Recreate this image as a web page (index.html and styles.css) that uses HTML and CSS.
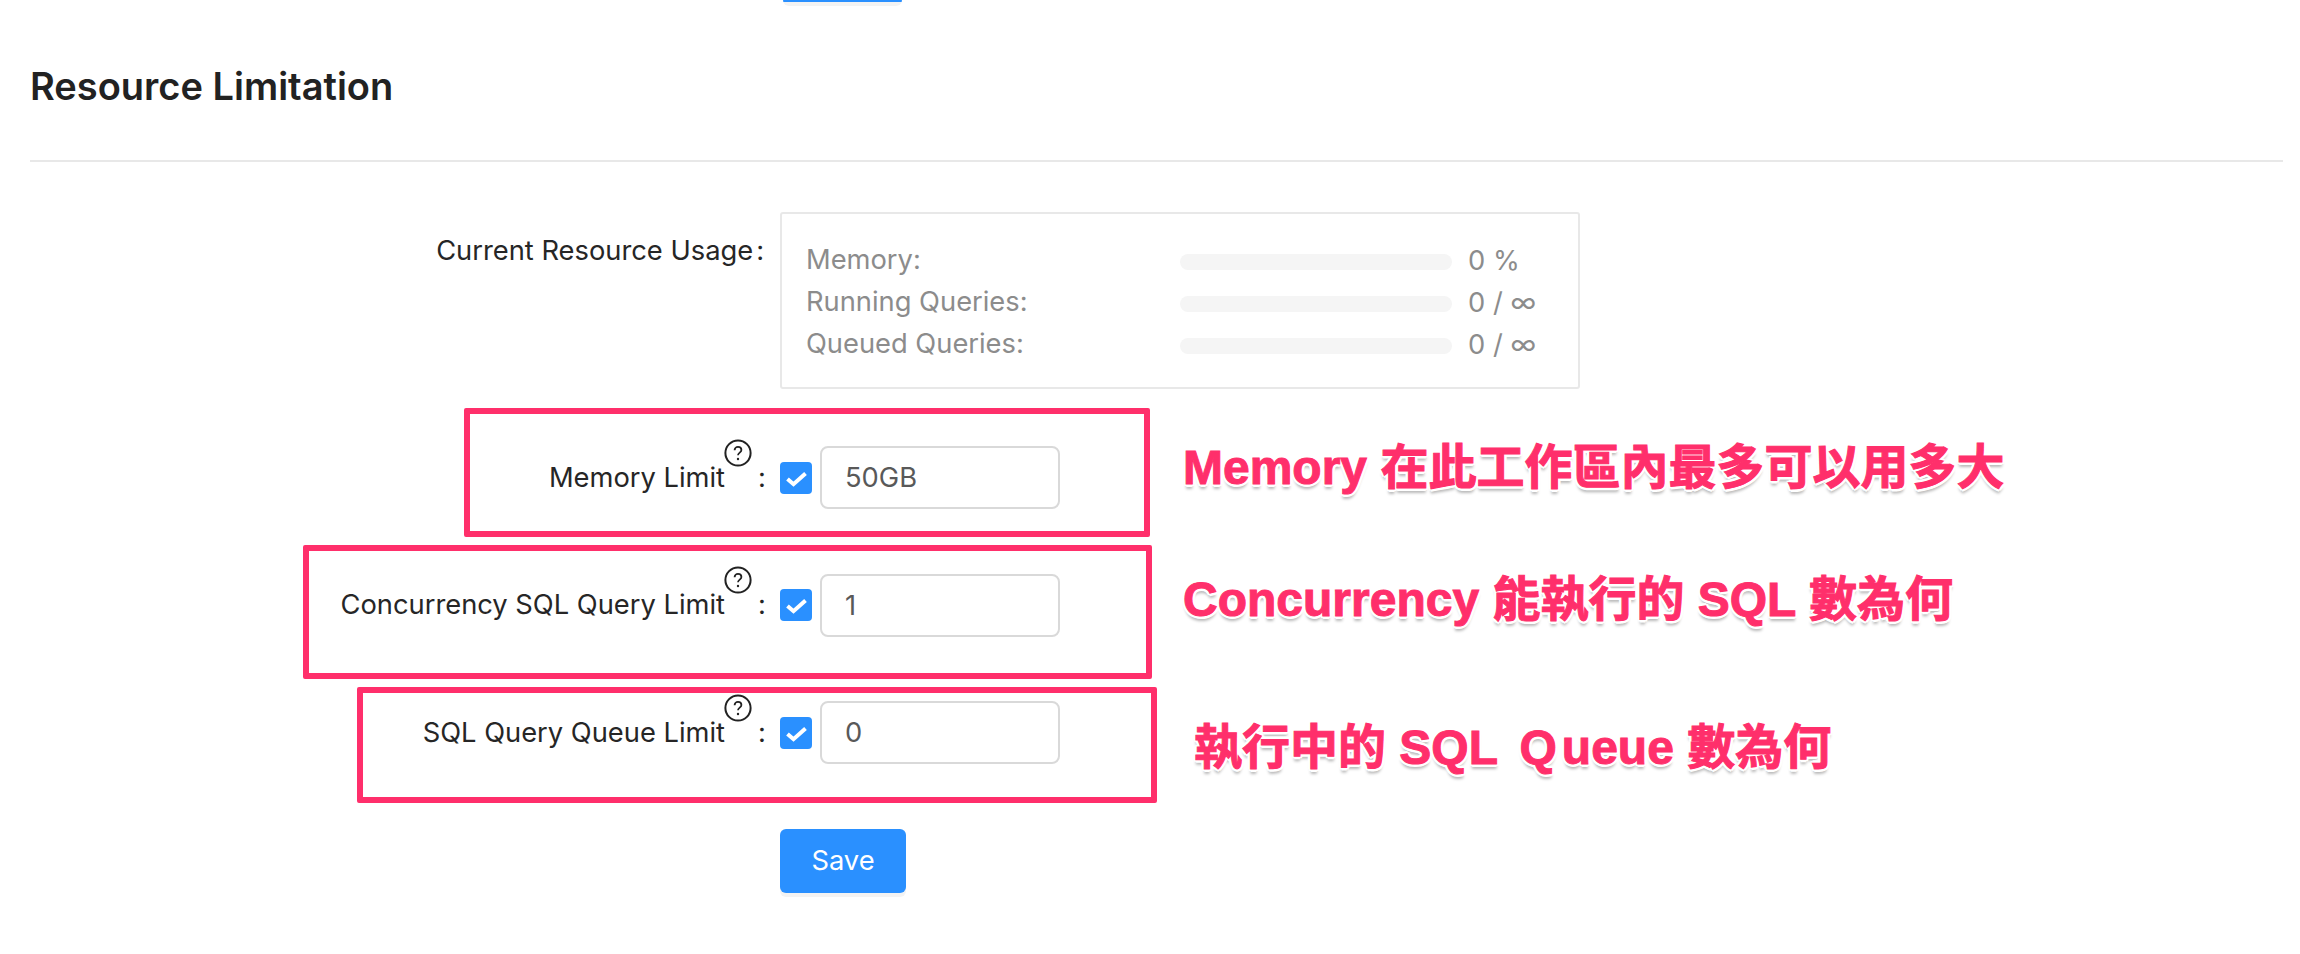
FILE: index.html
```html
<!DOCTYPE html>
<html lang="zh-Hant">
<head>
<meta charset="utf-8">
<title>Resource Limitation</title>
<link rel="stylesheet" href="styles.css">
</head>
<body>
<div class="page">
  <div class="top-strip"><div class="top-button"></div></div>
  <h2 class="title">Resource Limitation</h2>
  <div class="divider"></div>
  <form class="form">
    <div class="row usage-row">
      <div class="label">Current Resource Usage<span class="colon-tight">:</span></div>
      <div class="usage">
        <div class="usage-line"><span class="usage-name">Memory:</span><span class="bar"></span><span class="usage-value">0 %</span></div>
        <div class="usage-line"><span class="usage-name">Running Queries:</span><span class="bar"></span><span class="usage-value">0 / ∞</span></div>
        <div class="usage-line"><span class="usage-name">Queued Queries:</span><span class="bar"></span><span class="usage-value">0 / ∞</span></div>
      </div>
    </div>
    <div class="row limit-row">
      <div class="label"><span class="label-text">Memory Limit<svg class="help" viewBox="0 0 28 28"><circle cx="14" cy="14" r="12.6" fill="none" stroke="#222" stroke-width="2"/><path d="M10.6 11.2c0-2 1.5-3.3 3.4-3.3s3.4 1.3 3.4 3c0 2.7-3.4 2.7-3.4 5.4" fill="none" stroke="#222" stroke-width="1.8"/><circle cx="14" cy="20" r="1.2" fill="#222"/></svg></span><span class="colon">:</span></div>
      <div class="control">
        <span class="check"><svg viewBox="0 0 32 32"><path d="M7.5 17l6 5.2L25.5 11.5" fill="none" stroke="#fff" stroke-width="4"/></svg></span>
        <input class="input" type="text" value="50GB">
      </div>
    </div>
    <div class="row limit-row">
      <div class="label"><span class="label-text">Concurrency SQL Query Limit<svg class="help" viewBox="0 0 28 28"><circle cx="14" cy="14" r="12.6" fill="none" stroke="#222" stroke-width="2"/><path d="M10.6 11.2c0-2 1.5-3.3 3.4-3.3s3.4 1.3 3.4 3c0 2.7-3.4 2.7-3.4 5.4" fill="none" stroke="#222" stroke-width="1.8"/><circle cx="14" cy="20" r="1.2" fill="#222"/></svg></span><span class="colon">:</span></div>
      <div class="control">
        <span class="check"><svg viewBox="0 0 32 32"><path d="M7.5 17l6 5.2L25.5 11.5" fill="none" stroke="#fff" stroke-width="4"/></svg></span>
        <input class="input" type="text" value="1">
      </div>
    </div>
    <div class="row limit-row">
      <div class="label"><span class="label-text">SQL Query Queue Limit<svg class="help" viewBox="0 0 28 28"><circle cx="14" cy="14" r="12.6" fill="none" stroke="#222" stroke-width="2"/><path d="M10.6 11.2c0-2 1.5-3.3 3.4-3.3s3.4 1.3 3.4 3c0 2.7-3.4 2.7-3.4 5.4" fill="none" stroke="#222" stroke-width="1.8"/><circle cx="14" cy="20" r="1.2" fill="#222"/></svg></span><span class="colon">:</span></div>
      <div class="control">
        <span class="check"><svg viewBox="0 0 32 32"><path d="M7.5 17l6 5.2L25.5 11.5" fill="none" stroke="#fff" stroke-width="4"/></svg></span>
        <input class="input" type="text" value="0">
      </div>
    </div>
    <div class="row save-row">
      <div></div>
      <div><button class="save" type="button">Save</button></div>
    </div>
  </form>

  <div class="mark mark-1"></div>
  <div class="mark mark-2"></div>
  <div class="mark mark-3"></div>
  <div class="note note-1">Memory 在此工作區內最多可以用多大</div>
  <div class="note note-2">Concurrency 能執行的 SQL 數為何</div>
  <div class="note note-3">執行中的 SQL <span class="q">Q</span>ueue 數為何</div>
</div>
</body>
</html>
```

FILE: styles.css
```css
* { box-sizing: border-box; }
html, body { margin: 0; padding: 0; background: #fff; }
body { font-family: Inter, "Noto Sans", sans-serif; color: #262626; overflow: hidden; }
.page { position: relative; width: 2300px; height: 954px; overflow: hidden; padding: 0 17px 0 30px; }

.top-strip { height: 6px; padding-left: 753px; }
.top-button { width: 119px; height: 6px; background: #f3f3f3; border-radius: 0 0 6px 6px; border-top: 2px solid #2a90ff; }

.title { margin: 58px 0 0; font-size: 38px; line-height: 44px; font-weight: 600; color: #222; }
.divider { height: 2px; margin-top: 52px; background: #e8e8e8; }

.form { padding-top: 50px; }
.row { display: grid; grid-template-columns: 750px 1fr; }
.label { font-size: 27.3px; line-height: 44px; text-align: right; color: #262626; }
.colon-tight { margin-left: 3px; margin-right: 16px; }
.usage-row .label { padding-top: 17px; }
.usage { width: 800px; height: 177px; border: 2px solid #e8e8e8; border-radius: 3px; padding: 26px 24px; color: #8c8c8c; font-size: 27.3px; }
.usage-line { display: flex; align-items: center; height: 42px; }
.usage-name { width: 374px; padding-bottom: 4px; }
.bar { width: 272px; height: 16px; border-radius: 8px; background: #f5f5f5; margin-top: 2px; }
.usage-value { margin-left: 16px; padding-bottom: 2px; }

.limit-row { height: 127.5px; align-items: start; }
.usage-row { height: 234px; }
.limit-row .label { display: flex; justify-content: flex-end; align-items: center; height: 63px; }
.label-text { position: relative; padding-right: 33px; }
.help { position: absolute; right: 6px; top: -17px; width: 28px; height: 28px; }
.colon { width: 22px; text-align: left; }
.control { display: flex; align-items: center; gap: 8px; }
.check { width: 32px; height: 32px; border-radius: 4px; background: #2a90ff; display: block; }
.check svg { display: block; width: 32px; height: 32px; }
.input { width: 240px; height: 63px; border: 2px solid #d9d9d9; border-radius: 8px; padding: 0 23px; font: 27.3px Inter, sans-serif; color: #595959; background: #fff; outline: none; }

.save { display: block; width: 126px; height: 64px; border: 0; border-radius: 6px; background: #2a90ff; color: #fff; font: 27.3px Inter, sans-serif; box-shadow: 0 4px 0 #f3f3f3; }

.mark { position: absolute; border: 6px solid #ff2f6b; border-radius: 2px; }
.mark-1 { left: 464px; top: 408px; width: 686px; height: 129px; }
.mark-2 { left: 303px; top: 545px; width: 849px; height: 134px; }
.mark-3 { left: 357px; top: 687px; width: 800px; height: 116px; }

.note { position: absolute; white-space: nowrap; font: bold 48px/56px "Liberation Sans", "Noto Sans CJK TC", sans-serif; color: #ff2f6b; -webkit-text-stroke: 1px #ff2f6b;
  text-shadow: 3px 0 0 #fff, -3px 0 0 #fff, 0 3px 0 #fff, 0 -3px 0 #fff, 2px 2px 0 #fff, -2px 2px 0 #fff, 2px -2px 0 #fff, -2px -2px 0 #fff, 0 5px 3px rgba(0,0,0,.28); }
.note-1 { left: 1183px; top: 440px; }
.note-2 { left: 1183px; top: 572px; }
.note-3 { left: 1194px; top: 720px; }
.q { margin: 0 5px 0 9px; }
```
